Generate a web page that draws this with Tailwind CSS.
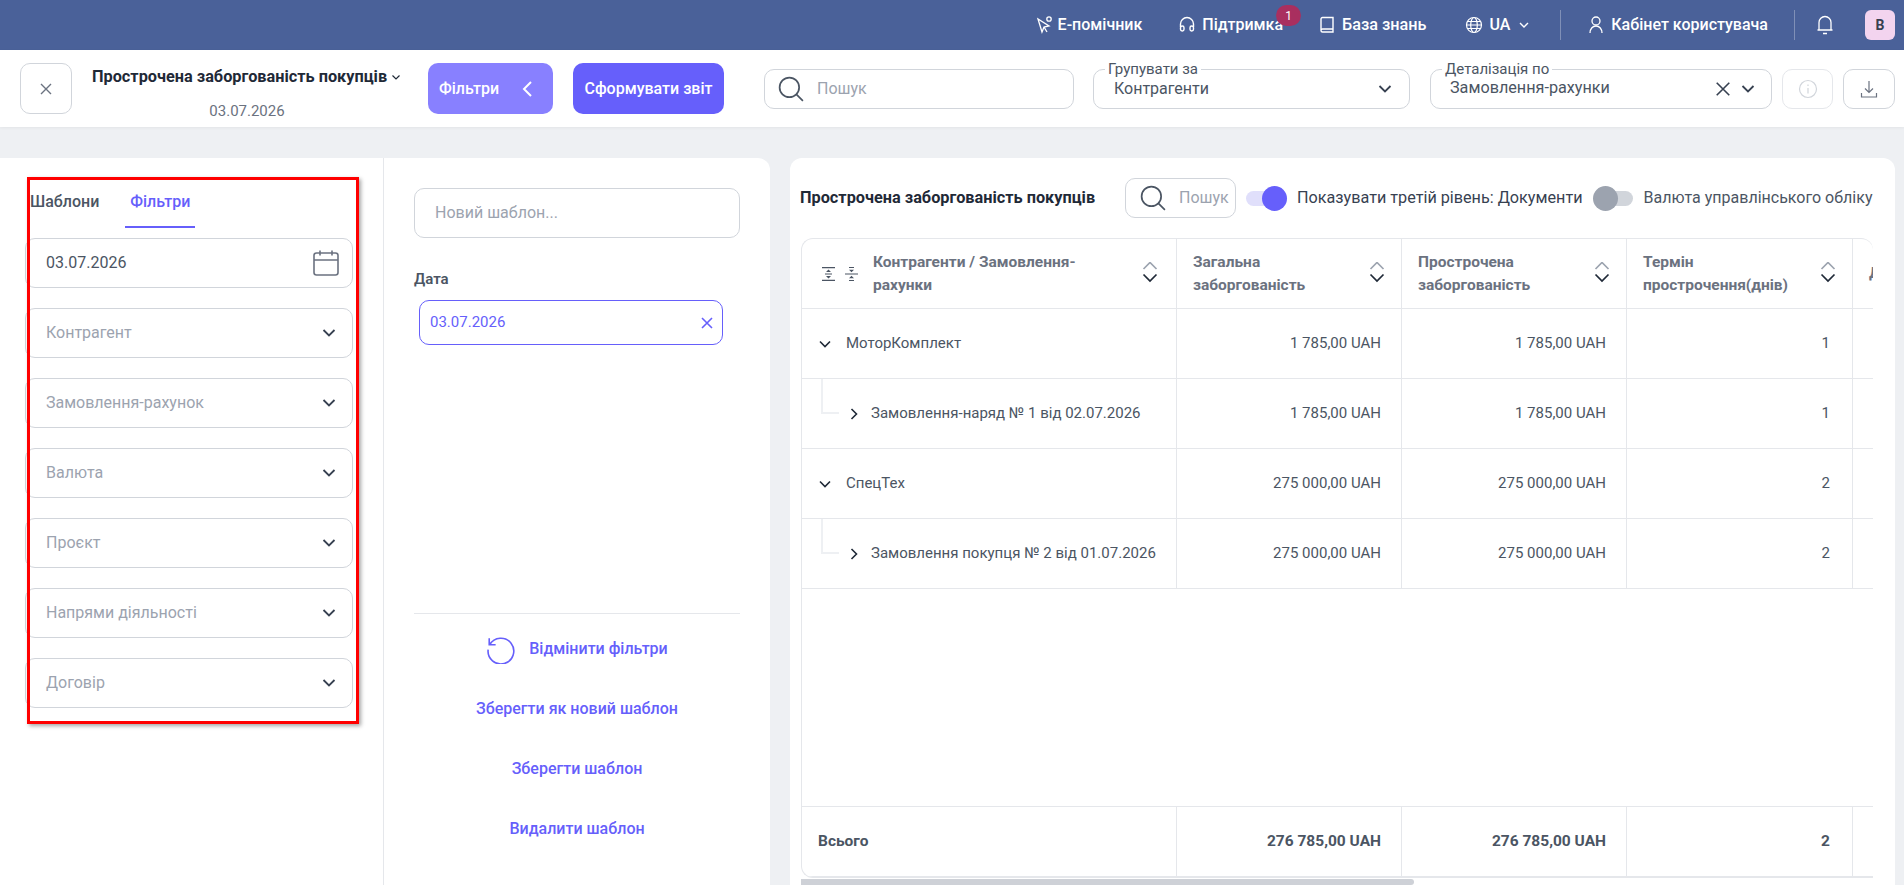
<!DOCTYPE html>
<html lang="uk">
<head>
    <meta charset="UTF-8">
    <meta name="viewport" content="width=device-width, initial-scale=1.0">
    <title>Прострочена заборгованість покупців</title>
    <script src="https://cdn.jsdelivr.net/npm/@tailwindcss/browser@4"></script>
</head>
<body class="h-screen overflow-hidden bg-[#eef0f3] font-['Roboto',sans-serif] text-[#4b5563] antialiased">
    <!-- top bar -->
    <header class="h-[50px] bg-[#4a6199] text-white flex items-center justify-end pr-[9px] text-[16px] font-medium">
        <svg class="w-[20px] h-[20px] mr-[3px]" viewBox="0 0 20 20" fill="none" stroke="currentColor" stroke-width="1.3"><path d="M3 4l4 13 2-5 5-1z"/><path d="M9 12l3 5"/><circle cx="14" cy="4" r="2.2"/></svg>
        <span class="mr-[36px]">Е-помічник</span>
        <svg class="w-[18px] h-[18px] mr-[6px]" viewBox="0 0 18 18" fill="none" stroke="currentColor" stroke-width="1.4"><path d="M2.5 11V8a6.5 6.5 0 0 1 13 0v3"/><rect x="2.5" y="10" width="3.5" height="5" rx="1.7"/><rect x="12" y="10" width="3.5" height="5" rx="1.7"/></svg>
        <span class="relative mr-[35px]">Підтримка
            <span class="absolute -top-[8px] -right-[18px] w-[25px] h-[21px] rounded-full bg-[#a92f5f] text-[12px] font-normal flex items-center justify-center">1</span>
        </span>
        <svg class="w-[18px] h-[18px] mr-[6px]" viewBox="0 0 18 18" fill="none" stroke="currentColor" stroke-width="1.4"><path d="M3 14.5V3a1.5 1.5 0 0 1 1.5-1.5H15V16H4.500A1.500 1.500 0 0 1 3 14.500a1.500 1.500 0 0 1 1.500-1.500H15"/></svg>
        <span class="mr-[39px] text-[16.200px]">База знань</span>
        <svg class="w-[18px] h-[18px] mr-[6px]" viewBox="0 0 18 18" fill="none" stroke="currentColor" stroke-width="1.2"><circle cx="9" cy="9" r="7.5"/><ellipse cx="9" cy="9" rx="3.300" ry="7.500"/><path d="M1.500 9h15M2.500 5.500h13M2.500 12.500h13"/></svg>
        <span class="mr-[8px]">UA</span>
        <svg class="w-[12px] h-[12px] mr-[30px]" viewBox="0 0 12 12" fill="none" stroke="currentColor" stroke-width="1.4"><path d="M2 4l4 4 4-4"/></svg>
        <div class="w-px h-[30px] bg-white/30 mr-[27px]"></div>
        <svg class="w-[16px] h-[20px] mr-[7px]" viewBox="0 0 16 20" fill="none" stroke="currentColor" stroke-width="1.3"><circle cx="8" cy="6" r="4"/><path d="M2 18c0-4 2.500-7 6-7s6 3 6 7"/></svg>
        <span class="mr-[26px]">Кабінет користувача</span>
        <div class="w-px h-[30px] bg-white/30 mr-[21px]"></div>
        <svg class="w-[18px] h-[20px] mr-[31px]" viewBox="0 0 18 20" fill="none" stroke="currentColor" stroke-width="1.300"><path d="M3 15V7.500a6 6 0 0 1 12 0V15zM1.500 15h15M7 18.500h4"/></svg>
        <div class="w-[30px] h-[30px] rounded-md bg-[#f3d4ef] text-[#374151] text-[14px] font-bold flex items-center justify-center">B</div>
    </header>

    <!-- report toolbar -->
    <div class="h-[77px] bg-white flex items-center pl-5 shadow-[0_1px_3px_rgba(0,0,0,0.05)]">
        <button class="w-[52px] h-[51px] rounded-[10px] border border-[#d1d5db] flex items-center justify-center text-[#6b7280]">
            <svg class="w-[16px] h-[16px]" viewBox="0 0 16 16" fill="none" stroke="currentColor" stroke-width="1.400"><path d="M3 3l10 10M13 3L3 13"/></svg>
        </button>
        <div class="w-[356px] pl-[20px] flex flex-col h-[62px] mt-[11px] justify-between">
            <div class="flex items-center text-[#1f2937] text-[16.300px] font-bold leading-5 mt-[4px] whitespace-nowrap">Прострочена заборгованість покупців
                <svg class="w-[10px] h-[10px] ml-[4px]" viewBox="0 0 10 10" fill="none" stroke="currentColor" stroke-width="1.200"><path d="M1.500 3.500L5 7l3.500-3.500"/></svg>
            </div>
            <div class="text-[15px] leading-5 mb-[4px] text-[#6b7280] text-center pr-[26px]">03.07.2026</div>
        </div>
        <button class="w-[125px] h-[51px] rounded-[10px] bg-[#8880ff] text-white text-[16px] font-medium flex items-center pl-[11px] gap-[21px]">Фільтри
            <svg class="w-[14px] h-[16px]" viewBox="0 0 14 16" fill="none" stroke="currentColor" stroke-width="2"><path d="M11 1L4 8l7 7"/></svg>
        </button>
        <button class="w-[151px] h-[51px] ml-[20px] rounded-[10px] bg-[#665ffb] text-white text-[16px] font-medium">Сформувати звіт</button>
        <div class="w-[310px] h-[40px] ml-[40px] rounded-[10px] border border-[#d1d5db] flex items-center pl-[13px]">
            <svg class="w-[26px] h-[26px]" viewBox="1 1 24 24" fill="none" stroke="#4b5563" stroke-width="1.600"><circle cx="11.500" cy="11.500" r="9"/><path d="M18 18l6 6"/></svg>
            <span class="ml-[13px] text-[#9ca3af] text-[16px]">Пошук</span>
        </div>
        <div class="relative w-[317px] h-[40px] ml-[19px] rounded-[10px] border border-[#d1d5db] flex items-center justify-between pl-[20px] pr-[17px] text-[16px]">
            <span class="absolute -top-[9px] left-[11px] bg-white px-[3px] text-[15px] leading-4">Групувати за</span>
            <span>Контрагенти</span>
            <svg class="w-[14px] h-[14px] text-[#374151]" viewBox="0 0 14 14" fill="none" stroke="currentColor" stroke-width="1.800"><path d="M1.500 4l5.500 5.500L12.500 4"/></svg>
        </div>
        <div class="relative w-[342px] h-[40px] ml-[20px] rounded-[10px] border border-[#d1d5db] flex items-center pl-[19px] pr-[16px] text-[16.200px]">
            <span class="absolute -top-[9px] left-[11px] bg-white px-[3px] text-[15px] leading-4">Деталізація по</span>
            <span class="flex-1">Замовлення-рахунки</span>
            <svg class="w-[16px] h-[16px] mr-[10px] text-[#374151]" viewBox="0 0 14 14" fill="none" stroke="currentColor" stroke-width="1.400"><path d="M1.500 1.500l11 11M12.500 1.500l-11 11"/></svg>
            <svg class="w-[14px] h-[14px] text-[#374151]" viewBox="0 0 14 14" fill="none" stroke="currentColor" stroke-width="1.800"><path d="M1.500 4l5.500 5.500L12.500 4"/></svg>
        </div>
        <button class="w-[51px] h-[40px] ml-[10px] rounded-[10px] border border-[#e5e7eb] flex items-center justify-center text-[#d1d5db]">
            <svg class="w-[20px] h-[20px]" viewBox="0 0 20 20" fill="none" stroke="currentColor" stroke-width="1.200"><circle cx="10" cy="10" r="8.500"/><path d="M10 9v5.500M10 5.500v1.500"/></svg>
        </button>
        <button class="w-[52px] h-[40px] ml-[10px] rounded-[10px] border border-[#d1d5db] flex items-center justify-center text-[#6b7280]">
            <svg class="w-[18px] h-[20px]" viewBox="0 0 18 20" fill="none" stroke="currentColor" stroke-width="1.200"><path d="M9 2v11M5 9.500l4 4 4-4M1.500 14v4h15v-4"/></svg>
        </button>
    </div>

    <main class="flex pt-[31px] pr-[9px] h-[758px]">
        <!-- filters panel -->
        <section class="relative w-[770px] h-[727px] bg-white rounded-tr-xl flex shrink-0">
            <div class="w-[384px] border-r border-[#e5e7eb] pl-[25px]">
                <div class="flex h-[70px] pl-[5px] text-[16px] font-medium">
                    <div class="pt-[32px]">Шаблони</div>
                    <div class="ml-[26px] w-[70px] h-[70px] pt-[32px] text-center text-[#665ffb] border-b-2 border-[#665ffb]">Фільтри</div>
                </div>
                <div class="w-[328px] mt-[10px] flex flex-col gap-5 text-[16px] text-[#9ca3af]">
                    <div class="h-[50px] rounded-[10px] border border-[#d1d5db] flex items-center justify-between pl-[20px] pr-[13px] text-[#4b5563]">03.07.2026
                        <svg class="w-[26px] h-[28px] text-[#6b7280]" viewBox="0 0 26 28" fill="none" stroke="currentColor" stroke-width="1.600"><rect x="1" y="4" width="24" height="22" rx="2.500"/><path d="M1 11h24M7 1.500v5M19 1.500v5"/></svg>
                    </div>
                    <div class="h-[50px] rounded-[10px] border border-[#d1d5db] flex items-center justify-between pl-[20px] pr-[16px]">Контрагент
                        <svg class="w-[14px] h-[14px] text-[#374151]" viewBox="0 0 14 14" fill="none" stroke="currentColor" stroke-width="1.800"><path d="M1.500 4l5.500 5.500L12.500 4"/></svg>
                    </div>
                    <div class="h-[50px] rounded-[10px] border border-[#d1d5db] flex items-center justify-between pl-[20px] pr-[16px]">Замовлення-рахунок
                        <svg class="w-[14px] h-[14px] text-[#374151]" viewBox="0 0 14 14" fill="none" stroke="currentColor" stroke-width="1.800"><path d="M1.500 4l5.500 5.500L12.500 4"/></svg>
                    </div>
                    <div class="h-[50px] rounded-[10px] border border-[#d1d5db] flex items-center justify-between pl-[20px] pr-[16px]">Валюта
                        <svg class="w-[14px] h-[14px] text-[#374151]" viewBox="0 0 14 14" fill="none" stroke="currentColor" stroke-width="1.800"><path d="M1.500 4l5.500 5.500L12.500 4"/></svg>
                    </div>
                    <div class="h-[50px] rounded-[10px] border border-[#d1d5db] flex items-center justify-between pl-[20px] pr-[16px]">Проєкт
                        <svg class="w-[14px] h-[14px] text-[#374151]" viewBox="0 0 14 14" fill="none" stroke="currentColor" stroke-width="1.800"><path d="M1.500 4l5.500 5.500L12.500 4"/></svg>
                    </div>
                    <div class="h-[50px] rounded-[10px] border border-[#d1d5db] flex items-center justify-between pl-[20px] pr-[16px]">Напрями діяльності
                        <svg class="w-[14px] h-[14px] text-[#374151]" viewBox="0 0 14 14" fill="none" stroke="currentColor" stroke-width="1.800"><path d="M1.500 4l5.500 5.500L12.500 4"/></svg>
                    </div>
                    <div class="h-[50px] rounded-[10px] border border-[#d1d5db] flex items-center justify-between pl-[20px] pr-[16px]">Договір
                        <svg class="w-[14px] h-[14px] text-[#374151]" viewBox="0 0 14 14" fill="none" stroke="currentColor" stroke-width="1.800"><path d="M1.500 4l5.500 5.500L12.500 4"/></svg>
                    </div>
                </div>
            </div>
            <div class="w-[386px] pl-[30px] pr-[30px] pt-[30px] flex flex-col">
                <div class="h-[50px] rounded-[10px] border border-[#d1d5db] flex items-center pl-[20px] text-[16px] text-[#9ca3af]">Новий шаблон...</div>
                <div class="mt-[31px] text-[15px] font-semibold leading-5">Дата</div>
                <div class="ml-[5px] mt-[11px] w-[304px] h-[45px] rounded-[10px] border border-[#665ffb] flex items-center justify-between pl-[10px] pr-[8px] text-[15px] text-[#665ffb]">03.07.2026
                    <svg class="w-[14px] h-[14px]" viewBox="0 0 14 14" fill="none" stroke="currentColor" stroke-width="1.600"><path d="M2 2l10 10M12 2L2 12"/></svg>
                </div>
                <div class="mt-[268px] border-t border-[#e5e7eb] flex flex-col items-center text-[16px] font-medium text-[#665ffb]">
                    <div class="h-[60px] mt-[5px] flex items-center gap-[13px]">
                        <svg class="w-[30px] h-[30px]" viewBox="0 0 28 28" fill="none" stroke="currentColor" stroke-width="1.500"><path d="M3 4v6h6"/><path d="M3.500 10A12 12 0 1 1 2 14.500"/></svg>
                        <span>Відмінити фільтри</span>
                    </div>
                    <div class="h-[60px] flex items-center">Зберегти як новий шаблон</div>
                    <div class="h-[60px] flex items-center">Зберегти шаблон</div>
                    <div class="h-[60px] flex items-center">Видалити шаблон</div>
                </div>
            </div>
            <!-- red annotation from the reference -->
            <div class="absolute left-[27px] top-[19px] w-[332px] h-[547px] border-[3px] border-[#ff0000] shadow-[2px_2px_4px_rgba(0,0,0,0.35)] pointer-events-none"></div>
        </section>

        <!-- report card -->
        <section class="relative ml-5 w-[1105px] h-[727px] bg-white rounded-t-xl pl-[11px] overflow-hidden">
            <div class="h-[80px] -ml-px flex items-center w-[1076px] overflow-hidden text-[16.200px] whitespace-nowrap">
                <span class="w-[325px] shrink-0 text-[16.300px] font-bold text-[#1f2937]">Прострочена заборгованість покупців</span>
                <div class="w-[111px] h-[40px] shrink-0 rounded-[10px] border border-[#d1d5db] flex items-center pl-[14px] overflow-hidden">
                    <svg class="w-[26px] h-[26px] shrink-0" viewBox="1 1 24 24" fill="none" stroke="#4b5563" stroke-width="1.600"><circle cx="11.500" cy="11.500" r="9"/><path d="M18 18l6 6"/></svg>
                    <span class="ml-[13px] text-[16px] text-[#9ca3af]">Пошук</span>
                </div>
                <div class="relative ml-[10px] w-[41px] h-[25px] shrink-0">
                    <div class="absolute left-0 top-[5px] w-[30px] h-[15px] rounded-full bg-[#e0dffb]"></div>
                    <div class="absolute right-0 top-0 w-[25px] h-[25px] rounded-full bg-[#665ffb]"></div>
                </div>
                <span class="ml-[10px] text-[#374151]">Показувати третій рівень: Документи</span>
                <div class="relative ml-[10px] w-[40px] h-[25px] shrink-0">
                    <div class="absolute right-0 top-[5px] w-[30px] h-[15px] rounded-full bg-[#d1d5db]"></div>
                    <div class="absolute left-0 top-0 w-[25px] h-[25px] rounded-full bg-[#9ca3af]"></div>
                </div>
                <span class="ml-[11px] text-[16px]">Валюта управлінського обліку</span>
            </div>

            <div class="w-[1072px] h-[640px] rounded-t-xl rounded-bl-xl border border-[#e5e7eb] border-r-0 overflow-hidden flex flex-col text-[15px]">
                <!-- head -->
                <div class="h-[70px] shrink-0 grid grid-cols-[375px_225px_225px_226px_100px] border-b border-[#e5e7eb] font-bold text-[15.500px] text-[#6b7280] leading-[23px]">
                    <div class="border-r border-[#e5e7eb] flex items-center pl-[19px]">
                        <svg class="w-[15px] h-[16px] shrink-0 text-[#4b5563]" viewBox="0 0 15 16" fill="currentColor"><path d="M1 1h13v1.200H1zM1 13.800h13V15H1zM4 7.400h7v1.200H4zM7.500 3.500L10 6H5zM7.500 12.500L5 10h5z"/></svg>
                        <svg class="w-[15px] h-[16px] ml-[8px] shrink-0 text-[#4b5563]" viewBox="0 0 15 16" fill="currentColor"><path d="M1 7.400h13v1.200H1zM7.500 6.200L5 3.700h5zM7.500 9.800L10 12.300H5zM5 1h5v1H5zM5 14h5v1H5z"/></svg>
                        <span class="ml-[14px] w-[230px]">Контрагенти / Замовлення-рахунки</span>
                        <svg class="w-[16px] h-[24px] ml-[39px] shrink-0" viewBox="0 0 16 24" fill="none" stroke-width="1.700"><path d="M1.500 7L8 .5 14.500 7" stroke="#9ca3af"/><path d="M1.500 12.500L8 19l6.500-6.500" stroke="#1f2937"/></svg>
                    </div>
                    <div class="border-r border-[#e5e7eb] flex items-center justify-between pl-[16px] pr-[16px]">
                        <span class="w-[150px]">Загальна заборгованість</span>
                        <svg class="w-[16px] h-[24px] shrink-0" viewBox="0 0 16 24" fill="none" stroke-width="1.700"><path d="M1.500 7L8 .5 14.500 7" stroke="#9ca3af"/><path d="M1.500 12.500L8 19l6.500-6.500" stroke="#1f2937"/></svg>
                    </div>
                    <div class="border-r border-[#e5e7eb] flex items-center justify-between pl-[16px] pr-[16px]">
                        <span class="w-[150px]">Прострочена заборгованість</span>
                        <svg class="w-[16px] h-[24px] shrink-0" viewBox="0 0 16 24" fill="none" stroke-width="1.700"><path d="M1.500 7L8 .5 14.500 7" stroke="#9ca3af"/><path d="M1.500 12.500L8 19l6.500-6.500" stroke="#1f2937"/></svg>
                    </div>
                    <div class="border-r border-[#e5e7eb] flex items-center justify-between pl-[16px] pr-[16px]">
                        <span class="w-[150px]">Термін прострочення(днів)</span>
                        <svg class="w-[16px] h-[24px] shrink-0" viewBox="0 0 16 24" fill="none" stroke-width="1.700"><path d="M1.500 7L8 .5 14.500 7" stroke="#9ca3af"/><path d="M1.500 12.500L8 19l6.500-6.500" stroke="#1f2937"/></svg>
                    </div>
                    <div class="pl-[16px] flex items-center">Дата</div>
                </div>
                <!-- rows -->
                <div class="h-[70px] shrink-0 grid grid-cols-[375px_225px_225px_226px_100px] border-b border-[#e5e7eb]">
                    <div class="border-r border-[#e5e7eb] flex items-center pl-[17px] gap-[15px]">
                        <svg class="w-[12px] h-[12px]" viewBox="0 0 12 12" fill="none" stroke="#1f2937" stroke-width="1.600"><path d="M1 3.500l5 5 5-5"/></svg>МоторКомплект
                    </div>
                    <div class="border-r border-[#e5e7eb] flex items-center justify-end pr-[20px]">1 785,00 UAH</div>
                    <div class="border-r border-[#e5e7eb] flex items-center justify-end pr-[20px]">1 785,00 UAH</div>
                    <div class="border-r border-[#e5e7eb] flex items-center justify-end pr-[22px]">1</div>
                    <div></div>
                </div>
                <div class="h-[70px] shrink-0 grid grid-cols-[375px_225px_225px_226px_100px] border-b border-[#e5e7eb]">
                    <div class="relative border-r border-[#e5e7eb] flex items-center pl-[46px] gap-[11px]">
                        <div class="absolute left-[19px] top-0 w-[18px] h-[35px] border-l-2 border-b-2 border-[#eef0f3]"></div>
                        <svg class="w-[12px] h-[12px]" viewBox="0 0 12 12" fill="none" stroke="#1f2937" stroke-width="1.600"><path d="M3.500 1l5 5-5 5"/></svg>Замовлення-наряд № 1 від 02.07.2026
                    </div>
                    <div class="border-r border-[#e5e7eb] flex items-center justify-end pr-[20px]">1 785,00 UAH</div>
                    <div class="border-r border-[#e5e7eb] flex items-center justify-end pr-[20px]">1 785,00 UAH</div>
                    <div class="border-r border-[#e5e7eb] flex items-center justify-end pr-[22px]">1</div>
                    <div></div>
                </div>
                <div class="h-[70px] shrink-0 grid grid-cols-[375px_225px_225px_226px_100px] border-b border-[#e5e7eb]">
                    <div class="border-r border-[#e5e7eb] flex items-center pl-[17px] gap-[15px]">
                        <svg class="w-[12px] h-[12px]" viewBox="0 0 12 12" fill="none" stroke="#1f2937" stroke-width="1.600"><path d="M1 3.500l5 5 5-5"/></svg>СпецТех
                    </div>
                    <div class="border-r border-[#e5e7eb] flex items-center justify-end pr-[20px]">275 000,00 UAH</div>
                    <div class="border-r border-[#e5e7eb] flex items-center justify-end pr-[20px]">275 000,00 UAH</div>
                    <div class="border-r border-[#e5e7eb] flex items-center justify-end pr-[22px]">2</div>
                    <div></div>
                </div>
                <div class="h-[70px] shrink-0 grid grid-cols-[375px_225px_225px_226px_100px] border-b border-[#e5e7eb]">
                    <div class="relative border-r border-[#e5e7eb] flex items-center pl-[46px] gap-[11px]">
                        <div class="absolute left-[19px] top-0 w-[18px] h-[35px] border-l-2 border-b-2 border-[#eef0f3]"></div>
                        <svg class="w-[12px] h-[12px]" viewBox="0 0 12 12" fill="none" stroke="#1f2937" stroke-width="1.600"><path d="M3.500 1l5 5-5 5"/></svg>Замовлення покупця № 2 від 01.07.2026
                    </div>
                    <div class="border-r border-[#e5e7eb] flex items-center justify-end pr-[20px]">275 000,00 UAH</div>
                    <div class="border-r border-[#e5e7eb] flex items-center justify-end pr-[20px]">275 000,00 UAH</div>
                    <div class="border-r border-[#e5e7eb] flex items-center justify-end pr-[22px]">2</div>
                    <div></div>
                </div>
                <div class="flex-1"></div>
                <!-- totals -->
                <div class="h-[71px] shrink-0 grid grid-cols-[375px_225px_225px_226px_100px] border-y border-[#e5e7eb] font-bold text-[15.500px]">
                    <div class="border-r border-[#e5e7eb] flex items-center pl-[16px]">Всього</div>
                    <div class="border-r border-[#e5e7eb] flex items-center justify-end pr-[20px]">276 785,00 UAH</div>
                    <div class="border-r border-[#e5e7eb] flex items-center justify-end pr-[20px]">276 785,00 UAH</div>
                    <div class="border-r border-[#e5e7eb] flex items-center justify-end pr-[22px]">2</div>
                    <div></div>
                </div>
            </div>
            <!-- scrollbar -->
            <div class="mt-[1px] w-[613px] h-[6px] rounded-r-md bg-[#ced1d7]"></div>
        </section>
    </main>
</body>
</html>
